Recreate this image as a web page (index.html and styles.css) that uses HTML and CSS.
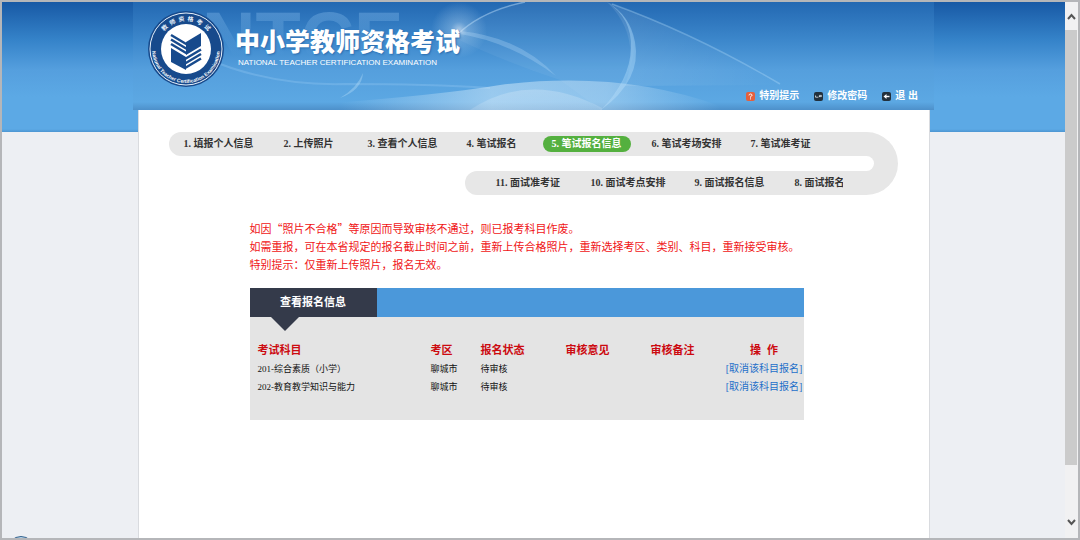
FILE: index.html
```html
<!DOCTYPE html>
<html lang="zh-CN">
<head>
<meta charset="utf-8">
<title>中小学教师资格考试</title>
<link rel="stylesheet" href="styles.css">
</head>
<body>
<div class="window">
  <div class="page">
    <header class="banner">
      <svg class="banner-art" viewBox="133 2 801 108" preserveAspectRatio="none" aria-hidden="true">
        <defs>
          <linearGradient id="fade" x1="0" y1="10" x2="0" y2="56" gradientUnits="userSpaceOnUse">
            <stop offset="0" stop-color="#8ec3f0" stop-opacity=".36"/>
            <stop offset="1" stop-color="#8ec3f0" stop-opacity="0"/>
          </linearGradient>
          <linearGradient id="hill" x1="0" y1="80" x2="0" y2="112" gradientUnits="userSpaceOnUse">
            <stop offset="0" stop-color="#fff" stop-opacity=".5"/>
            <stop offset="1" stop-color="#fff" stop-opacity=".25"/>
          </linearGradient>
          <linearGradient id="sweep" x1="610" y1="0" x2="780" y2="0" gradientUnits="userSpaceOnUse">
            <stop offset="0" stop-color="#fff" stop-opacity=".1"/>
            <stop offset="1" stop-color="#fff" stop-opacity="0"/>
          </linearGradient>
          <linearGradient id="hillside" x1="340" y1="0" x2="720" y2="0" gradientUnits="userSpaceOnUse">
            <stop offset="0" stop-color="#d8edfb" stop-opacity="0"/>
            <stop offset=".4" stop-color="#d8edfb" stop-opacity=".5"/>
            <stop offset=".7" stop-color="#d8edfb" stop-opacity=".4"/>
            <stop offset="1" stop-color="#d8edfb" stop-opacity="0"/>
          </linearGradient>
          <radialGradient id="flare">
            <stop offset="0" stop-color="#fff" stop-opacity=".6"/>
            <stop offset=".3" stop-color="#cfe8fb" stop-opacity=".3"/>
            <stop offset="1" stop-color="#cfe8fb" stop-opacity="0"/>
          </radialGradient>
        </defs>
        <text class="watermark" x="202" y="64" fill="url(#fade)">NTCE</text>
        <path d="M455 38Q480 12 525 2L607 2Q634 18 634 50Q632 78 601 110L560 80Q500 60 455 38Z" fill="#fff" opacity=".05"/>
        <path d="M607 2Q690 32 780 85L625 86Q642 36 607 2Z" fill="url(#sweep)"/>
        <path d="M458 34Q482 11 525 2" fill="none" stroke="#b9dcf7" stroke-width="1.5" opacity=".5"/>
        <path d="M607 2Q632 18 631 48Q630 80 601 110Q642 80 635 42Q630 15 607 2Z" fill="#a9d6f8" opacity=".45"/>
        <path d="M612 4Q695 34 780 84" fill="none" stroke="#b5dcf8" stroke-width="1.5" opacity=".35"/>
        <path d="M460 31Q520 37 556 76Q510 42 460 34Z" fill="#b5dcf8" opacity=".3"/>
        <path d="M205 58Q270 86 345 84Q430 84 490 88" fill="none" stroke="#9acdf5" stroke-width="2" opacity=".3"/>
        <path d="M363 73Q357 88 340 98Q362 90 363 73Z" fill="#b5dcf8" opacity=".4"/>
        <path d="M320 104Q440 95 500 85Q620 70 720 106V110H320Z" fill="url(#hillside)"/>
        <path d="M470 110Q530 70 602 108V110Z" fill="url(#hill)" opacity=".5"/>
        <circle cx="459" cy="30" r="28" fill="url(#flare)"/>
      </svg>
      <svg class="seal" viewBox="0 0 78 78" role="img" aria-label="教师资格考试">
        <defs>
          <path id="arc-top" d="M11 39A28 28 0 0 1 67 39"/>
          <path id="arc-bottom" d="M5 39A34 34 0 0 0 73 39"/>
        </defs>
        <circle cx="39" cy="39" r="38" fill="#174a8c"/>
        <circle cx="39" cy="39" r="36" fill="none" stroke="#e6f0fa" stroke-width="1"/>
        <circle cx="39" cy="39" r="25" fill="#fff"/>
        <text class="seal-cn"><textPath href="#arc-top" startOffset="50%" text-anchor="middle">教&#160; 师&#160; 资&#160; 格&#160; 考&#160; 试</textPath></text>
        <text class="seal-en"><textPath href="#arc-bottom" startOffset="50%" text-anchor="middle">National Teacher Certification Examination</textPath></text>
        <path fill="#174a8c" d="M39 32L54 23V36L39 45ZM24 38L39 47V60L24 52Z"/>
        <path d="M24 25L40 34.500M24 29.500L40 39M24 34L40 43.500M54 39.500L38 49M54 44L38 53.500M54 48.500L38 58" stroke="#174a8c" stroke-width="2.500"/>
      </svg>
      <div class="brand">
        <h1 class="brand-title">中小学教师资格考试</h1>
        <p class="brand-sub">NATIONAL TEACHER CERTIFICATION EXAMINATION</p>
      </div>
      <div class="account">
        <a class="account-link" href="#tips">
          <svg class="icon" viewBox="0 0 9 9" aria-hidden="true"><rect width="9" height="9" rx="2" fill="#e4603d"/><path d="M3 3.400Q3 2 4.500 2T6 3.300Q6 4 4.500 4.700V5.600M4.500 6.400V7.400" fill="none" stroke="#fff"/></svg>特别提示</a>
        <a class="account-link" href="#password">
          <svg class="icon" viewBox="0 0 9 9" aria-hidden="true"><rect width="9" height="9" rx="2" fill="#22303c"/><path d="M1.500 3.500V5.200H4.400M5 4.600H7.400V3.400H5.400V5" fill="none" stroke="#dfe8ee" stroke-width=".8"/></svg>修改密码</a>
        <a class="account-link" href="#logout">
          <svg class="icon" viewBox="0 0 9 9" aria-hidden="true"><rect width="9" height="9" rx="2" fill="#22303c"/><path d="M7.500 4.500H3" stroke="#fff" stroke-width="1.400"/><path d="M1.500 4.500L4.500 2V7Z" fill="#fff"/></svg>退 出</a>
      </div>
    </header>

    <main class="sheet">
      <nav class="steps" aria-label="报名步骤">
        <div class="lanes">
          <div class="lane lane-out">
            <a class="step" href="#s1">1. 填报个人信息</a>
            <a class="step" href="#s2">2. 上传照片</a>
            <a class="step" href="#s3">3. 查看个人信息</a>
            <a class="step" href="#s4">4. 笔试报名</a>
            <a class="step step-current" href="#s5" aria-current="step">5. 笔试报名信息</a>
            <a class="step" href="#s6">6. 笔试考场安排</a>
            <a class="step" href="#s7">7. 笔试准考证</a>
          </div>
          <div class="lane lane-back">
            <a class="step" href="#s11">11. 面试准考证</a>
            <a class="step" href="#s10">10. 面试考点安排</a>
            <a class="step" href="#s9">9. 面试报名信息</a>
            <a class="step" href="#s8">8. 面试报名</a>
          </div>
        </div>
        <div class="turn"></div>
      </nav>

      <div class="content">
        <p class="notice">如因“照片不合格”等原因而导致审核不通过，则已报考科目作废。<br>
        如需重报，可在本省规定的报名截止时间之前，重新上传合格照片，重新选择考区、类别、科目，重新接受审核。<br>
        特别提示：仅重新上传照片，报名无效。</p>

        <section class="panel">
          <div class="panel-bar"><h2 class="panel-tab">查看报名信息</h2></div>
          <table class="records">
            <colgroup>
              <col class="col-subject"><col class="col-area"><col class="col-state">
              <col class="col-opinion"><col class="col-remark"><col class="col-action">
            </colgroup>
            <thead>
              <tr><th>考试科目</th><th>考区</th><th>报名状态</th><th>审核意见</th><th>审核备注</th><th class="action">操&nbsp; 作</th></tr>
            </thead>
            <tbody>
              <tr><td>201-综合素质（小学）</td><td>聊城市</td><td>待审核</td><td></td><td></td><td class="action"><a class="cancel" href="#c201">[取消该科目报名]</a></td></tr>
              <tr><td>202-教育教学知识与能力</td><td>聊城市</td><td>待审核</td><td></td><td></td><td class="action"><a class="cancel" href="#c202">[取消该科目报名]</a></td></tr>
            </tbody>
          </table>
        </section>
      </div>
    </main>
  </div>

  <div class="scrollbar">
    <button class="scroll-button" type="button" aria-label="向上滚动"><svg class="chevron" viewBox="0 0 9 7" aria-hidden="true"><path d="M1 6L4.500 2L8 6" fill="none" stroke="#555" stroke-width="2"/></svg></button>
    <div class="scroll-thumb"></div>
    <div class="scroll-rest"></div>
    <button class="scroll-button" type="button" aria-label="向下滚动"><svg class="chevron" viewBox="0 0 9 7" aria-hidden="true"><path d="M1 1L4.500 5L8 1" fill="none" stroke="#555" stroke-width="2"/></svg></button>
  </div>
  <div class="orb"></div>
</div>
</body>
</html>
```

FILE: styles.css
```css
* {
  box-sizing: border-box;
}

body {
  margin: 0;
  font-family: "Liberation Sans", "Noto Sans CJK SC", sans-serif;
  font-size: 10px;
  color: #222;
}

h1, h2, p {
  margin: 0;
}

a {
  text-decoration: none;
}

.window {
  position: relative;
  display: flex;
  min-height: 100vh;
  overflow: hidden;
  border: 2px solid #b5b6b9;
}

.page {
  flex: 1;
  display: flex;
  flex-direction: column;
  align-items: center;
  background: linear-gradient(#1859a5, #3583c9 38px, #559fde 68px, #5ca9e5 95px, #5ca9e5 127px, #4d96d2) no-repeat #edeff3;
  background-size: 100% 130px;
}

.banner {
  position: relative;
  display: flex;
  align-items: flex-start;
  width: 100%;
  max-width: 801px;
  height: 108px;
  padding: 0 16px 0 14px;
  background: linear-gradient(#2368b2, #3c87cb 38px, #559fdd 68px, #5ca8e3 100px, #4d90ca);
}

.banner-art {
  position: absolute;
  inset: 0;
  width: 100%;
  height: 100%;
}

.watermark {
  font-family: "Liberation Sans", sans-serif;
  font-size: 74px;
  font-weight: bold;
}

.seal {
  position: relative;
  width: 78px;
  height: 78px;
  margin-top: 8px;
}

.seal-cn {
  font-family: "Noto Sans CJK SC", sans-serif;
  font-size: 6px;
  font-weight: bold;
  fill: #e6f0fa;
}

.seal-en {
  font-size: 5px;
  font-weight: bold;
  fill: #fff;
}

.brand {
  position: relative;
  margin: 23px 0 0 10px;
  color: #fff;
}

.brand-title {
  font-size: 25px;
  line-height: 34px;
  font-weight: 900;
  text-shadow: 1px 1px 2px #2a6cae;
}

.brand-sub {
  padding-left: 3px;
  font-size: 8px;
  line-height: 8px;
}

.account {
  position: relative;
  display: flex;
  gap: 15px;
  margin: 87px 0 0 auto;
}

.account-link {
  display: flex;
  align-items: center;
  gap: 4px;
  line-height: 14px;
  font-weight: bold;
  color: #fff;
}

.icon {
  width: 9px;
  height: 9px;
}

.sheet {
  flex: 1;
  width: 100%;
  max-width: 792px;
  padding: 22px 31px 0 30px;
  border: solid #d9dbdf;
  border-width: 0 1px;
  background: #fff;
}

.steps {
  display: flex;
}

.lanes {
  flex: 1;
  display: flex;
  flex-direction: column;
  justify-content: space-between;
}

.lane {
  display: grid;
  align-items: center;
  height: 24px;
  border-radius: 12px 0 0 12px;
  background: #e7e7e7;
}

.lane-out {
  grid-template-columns: 100px 84px 99px 76px 109px 99px 1fr;
  padding-left: 15px;
}

.lane-back {
  grid-template-columns: 95px 104px 100px 1fr;
  align-self: flex-end;
  width: 378px;
  padding-left: 31px;
}

.step {
  font-family: "Liberation Serif", "Noto Sans CJK SC", serif;
  line-height: 16px;
  font-weight: bold;
  color: #333;
  white-space: nowrap;
}

.step-current {
  justify-self: start;
  padding: 0 9px;
  border-radius: 8px;
  background: #54b03f;
  color: #fff;
}

.turn {
  width: 55px;
  height: 63px;
  border: 24px solid #e7e7e7;
  border-left: 0;
  border-radius: 0 32px 32px 0;
}

.content {
  max-width: 635px;
  padding: 24px 0 0 81px;
}

.notice {
  font-family: "Noto Sans CJK SC", sans-serif;
  font-size: 11px;
  line-height: 18px;
  color: #f01416;
}

.panel {
  margin-top: 15px;
  padding-bottom: 24px;
  background: #e4e4e4;
}

.panel-bar {
  background: #4b98da;
}

.panel-tab {
  position: relative;
  width: 127px;
  font-size: 11px;
  line-height: 29px;
  font-weight: bold;
  text-align: center;
  background: #343a4a;
  color: #fff;
}

.panel-tab::after {
  content: "";
  position: absolute;
  top: 100%;
  left: 21px;
  border: 14px solid transparent;
  border-top-color: #343a4a;
  border-bottom: 0;
}

.records {
  width: 100%;
  margin-top: 24px;
  border-collapse: collapse;
  table-layout: fixed;
  text-align: left;
  white-space: nowrap;
}

.col-subject {
  width: 181px;
}

.col-area {
  width: 50px;
}

.col-state,
.col-opinion {
  width: 85px;
}

.col-remark {
  width: 74px;
}

.records th {
  padding: 0;
  font-size: 11px;
  line-height: 19px;
  color: #cc0a10;
}

.records td {
  padding: 0;
  font-family: "Liberation Serif", "Noto Sans CJK SC", serif;
  font-size: 9px;
  line-height: 18px;
  color: #111;
}

.records th:first-child,
.records td:first-child {
  padding-left: 8px;
}

.records .action {
  text-align: center;
}

.cancel {
  font-size: 10px;
  color: #1d6fc9;
}

.scrollbar {
  display: flex;
  flex-direction: column;
  width: 13px;
  padding-bottom: 2px;
  background: #f1f1f2;
}

.scroll-button {
  display: flex;
  align-items: center;
  justify-content: center;
  height: 28px;
  padding: 0;
  border: 0;
  background: none;
}

.chevron {
  width: 9px;
  height: 7px;
}

.scroll-thumb {
  flex: 10;
  margin-right: 1px;
  background: #cbcbcb;
}

.scroll-rest {
  flex: 1;
}

.orb {
  position: absolute;
  bottom: -26px;
  left: 5px;
  width: 28px;
  height: 28px;
  border: 1px solid #35628c;
  border-radius: 50%;
  background: #b4d3ea;
}
```
